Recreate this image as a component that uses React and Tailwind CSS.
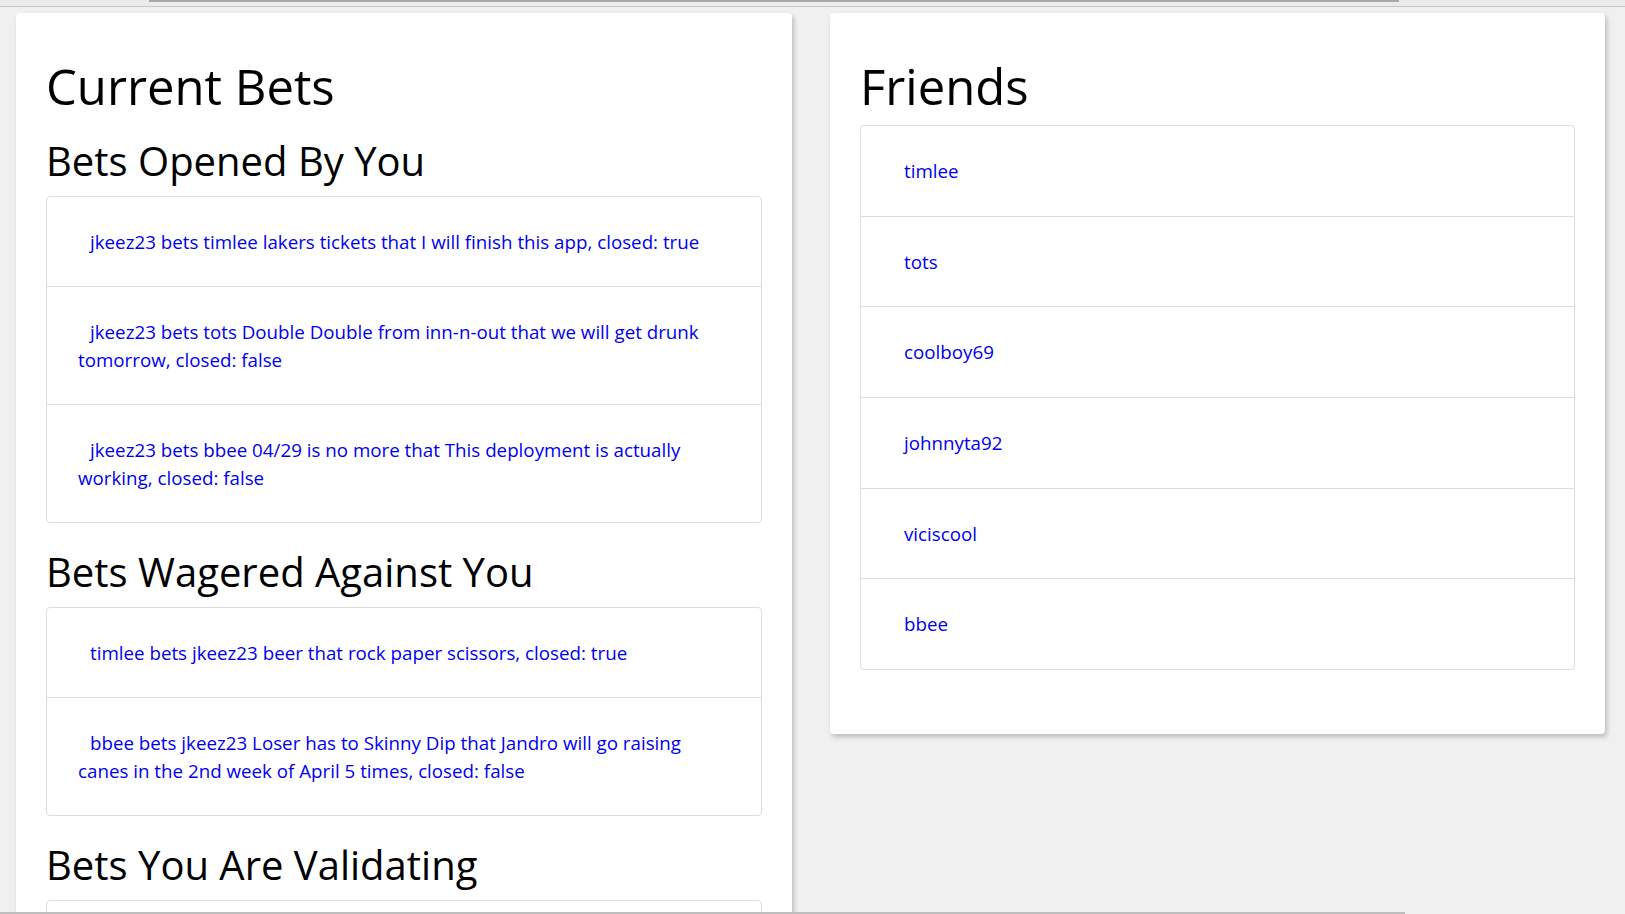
const openedByYou = [
  'jkeez23 bets timlee lakers tickets that I will finish this app, closed: true',
  'jkeez23 bets tots Double Double from inn-n-out that we will get drunk tomorrow, closed: false',
  'jkeez23 bets bbee 04/29 is no more that This deployment is actually working, closed: false',
];

const wageredAgainstYou = [
  'timlee bets jkeez23 beer that rock paper scissors, closed: true',
  'bbee bets jkeez23 Loser has to Skinny Dip that Jandro will go raising canes in the 2nd week of April 5 times, closed: false',
];

const friends = ['timlee', 'tots', 'coolboy69', 'johnnyta92', 'viciscool', 'bbee'];

const ListGroup = ({ items, className = '', rowClass = 'py-[30.5px]' }) => {
  return (
    <ul className={`border border-[#dddddd] rounded-[4px] bg-white ${className}`}>
      {items.map((item, i) => (
        <li
          key={i}
          className={`px-[31px] ${rowClass} border-t border-[#dddddd] first:border-t-0 text-[18.75px] leading-[28px] text-[#0000ee] indent-[12px]`}
        >
          {item}
        </li>
      ))}
    </ul>
  );
};

const SectionTitle = ({ children }) => (
  <h2 className="text-[40px] leading-[44px] font-normal text-black mb-[13px]">{children}</h2>
);

const App = () => {
  return (
    <div
      className="h-[914px] overflow-hidden flex flex-col bg-[#f0f0f0]"
      style={{ fontFamily: '"Open Sans", "Noto Sans", sans-serif' }}
    >
      {/* top strip */}
      <div className="h-[7px] shrink-0 bg-[#ececec] border-b border-[#c6c6c6] pl-[149px]">
        <div className="w-[1250px] h-[2px] bg-[#a9a9a9]" />
      </div>

      <main className="flex-1 min-h-0 overflow-hidden pt-[6px] pl-[16px] grid grid-cols-[776px_775px] gap-[38px] items-start">
        <section className="bg-white rounded-[4px] shadow-[2px_3px_5px_rgba(0,0,0,0.22)] px-[30px] pt-[46px] pb-[40px]">
          <h1 className="text-[49px] leading-[54px] font-normal text-black mb-[26px]">Current Bets</h1>

          <SectionTitle>Bets Opened By You</SectionTitle>
          <ListGroup items={openedByYou} className="mb-[27px]" />

          <SectionTitle>Bets Wagered Against You</SectionTitle>
          <ListGroup items={wageredAgainstYou} className="mb-[27px]" />

          <SectionTitle>Bets You Are Validating</SectionTitle>
          <div className="border border-[#dddddd] rounded-[4px] h-[90px]" />
        </section>

        <section className="bg-white rounded-[4px] shadow-[2px_3px_5px_rgba(0,0,0,0.22)] px-[30px] pt-[46px] pb-[64px]">
          <h1 className="text-[49px] leading-[54px] font-normal text-black mb-[12px]">Friends</h1>
          <ListGroup items={friends} rowClass="py-[30.85px]" />
        </section>
      </main>

      {/* bottom bar */}
      <div className="h-[2px] shrink-0">
        <div className="w-[1405px] h-[2px] bg-[#bdbdbd]" />
      </div>
    </div>
  );
};

export default App;
